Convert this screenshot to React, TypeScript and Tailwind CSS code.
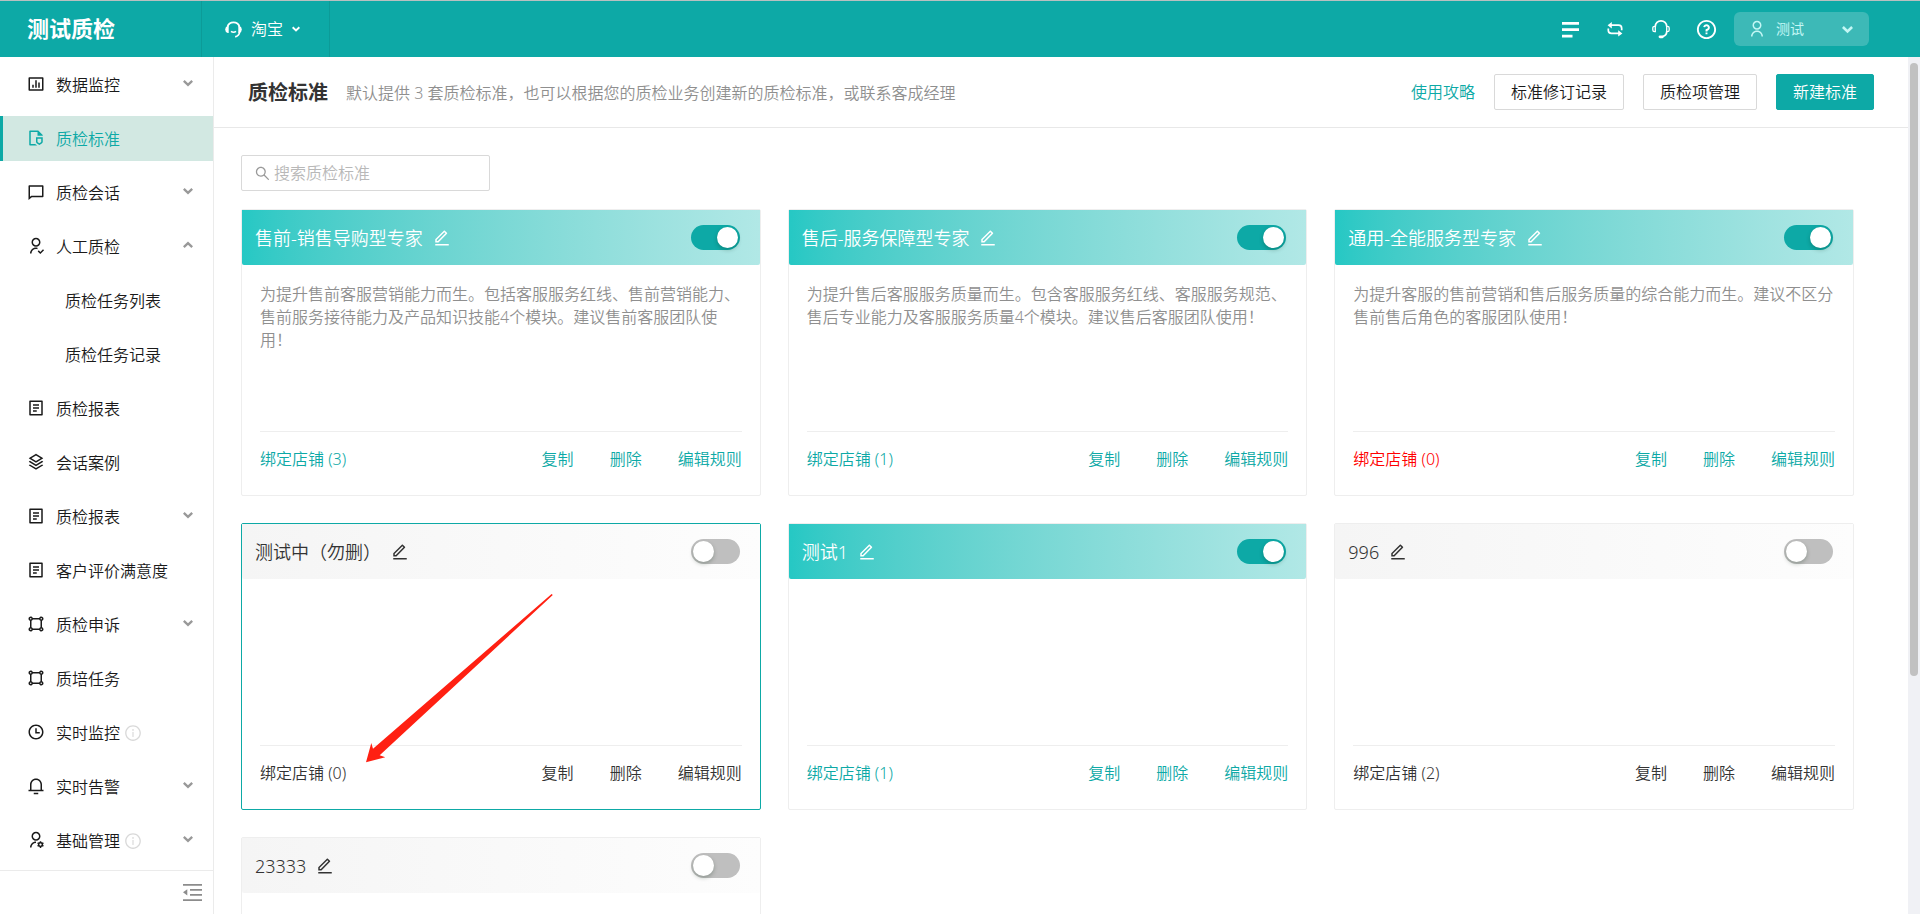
import { useState } from "react";
import type { ReactNode } from "react";
import {
  RiBarChartBoxLine,
  RiChat4Line,
  RiEditLine,
  RiFileShield2Line,
  RiNotification3Line,
  RiQuestionLine,
  RiShapeLine,
  RiStackLine,
  RiTimeLine,
  RiUserFollowLine,
  RiUserLine,
  RiUserSettingsLine,
} from "react-icons/ri";
import { AiOutlineInfoCircle, AiOutlineSearch } from "react-icons/ai";

function Chevron({ up = false, size = 10 }: { up?: boolean; size?: number }) {
  return (
    <svg width={size} height={size} viewBox="0 0 10 10" fill="none" stroke="currentColor" strokeWidth="2.4" aria-hidden="true">
      <path d={up ? "M.8 7.2 5 3.2 9.2 7.2" : "M.8 2.8 5 6.8 9.2 2.8"} />
    </svg>
  );
}

function ReportIcon() {
  return (
    <svg width="18" height="18" viewBox="0 0 24 24" fill="currentColor" aria-hidden="true">
      <path d="M20 22H4a1 1 0 0 1-1-1V3a1 1 0 0 1 1-1h16a1 1 0 0 1 1 1v18a1 1 0 0 1-1 1zm-1-2V4H5v16h14zM8 7h8v2H8V7zm0 4h8v2H8v-2zm0 4h5v2H8v-2z" />
    </svg>
  );
}

function ServiceIcon() {
  return (
    <svg width="19" height="19" viewBox="0 0 19 19" fill="none" stroke="currentColor" aria-hidden="true">
      <path d="M3.4 6.8a6.4 6.4 0 0 1 12.200 0M15.800 11.500a6.600 6.600 0 0 1-4.600 5.400" strokeWidth="1.700" />
      <path d="M4 6.600v5.600A2.900 2.900 0 0 1 4 6.600zM15 6.600v5.600a2.900 2.900 0 0 0 0-5.600z" fill="currentColor" strokeWidth="1.400" />
      <path d="M7 11.300c1.600 1.200 3.400 1.200 5 0" strokeWidth="1.600" />
    </svg>
  );
}

function BarsIcon() {
  return (
    <svg width="17" height="17" viewBox="0 0 17 17" fill="currentColor" aria-hidden="true">
      <path d="M0 1h17v2.700H0zM0 7.300h17V10H0zM0 13.700h10.500v2.700H0z" />
    </svg>
  );
}

function LoopIcon() {
  return (
    <svg width="16" height="16" viewBox="0 0 16 16" fill="none" stroke="currentColor" strokeWidth="1.700" aria-hidden="true">
      <path d="M3 4.200h8.500a3.200 3.200 0 0 1 3.200 3.200v1.800M13 12.400H4.500a3.200 3.200 0 0 1-3.200-3.200V7.400" />
      <path d="M4.800 1v6.400L.6 4.200zM11.200 9.200v6.400l4.200-3.200z" fill="currentColor" stroke="none" />
    </svg>
  );
}

function HeadsetIcon() {
  return (
    <svg width="20" height="20" viewBox="0 0 20 20" fill="none" stroke="currentColor" strokeWidth="1.700" aria-hidden="true">
      <path d="M4.300 7.500a5.700 5.700 0 0 1 11.400 0M15.700 12.500c0 2.500-1.600 4.400-4 5" />
      <path d="M4.300 7.300H3.600A1.800 1.800 0 0 0 1.800 9.100v1.800a1.800 1.800 0 0 0 1.800 1.800h.7zM15.700 7.300h.7a1.800 1.800 0 0 1 1.800 1.800v1.800a1.800 1.800 0 0 1-1.800 1.800h-.7z" strokeWidth="1.300" />
      <path d="M9 17.800h2.400" strokeWidth="2.800" strokeLinecap="round" />
    </svg>
  );
}

function CollapseIcon() {
  return (
    <svg width="19" height="17" viewBox="0 0 19 17" fill="currentColor" aria-hidden="true">
      <path d="M0 0h19v1.800H0zM7 5h12v1.700H7zM7 10h12v1.700H7zM0 15.200h19V17H0zM0 8.300 4.300 5.200v6.300z" />
    </svg>
  );
}

type NavItem = {
  label: string;
  icon?: ReactNode;
  arrow?: "up" | "down";
  info?: boolean;
  active?: boolean;
};

const navItems: NavItem[] = [
  { label: "数据监控", icon: <RiBarChartBoxLine size={18} />, arrow: "down" },
  { label: "质检标准", icon: <RiFileShield2Line size={18} />, active: true },
  { label: "质检会话", icon: <RiChat4Line size={18} />, arrow: "down" },
  { label: "人工质检", icon: <RiUserFollowLine size={18} />, arrow: "up" },
  { label: "质检任务列表" },
  { label: "质检任务记录" },
  { label: "质检报表", icon: <ReportIcon /> },
  { label: "会话案例", icon: <RiStackLine size={18} /> },
  { label: "质检报表", icon: <ReportIcon />, arrow: "down" },
  { label: "客户评价满意度", icon: <ReportIcon /> },
  { label: "质检申诉", icon: <RiShapeLine size={18} />, arrow: "down" },
  { label: "质培任务", icon: <RiShapeLine size={18} /> },
  { label: "实时监控", icon: <RiTimeLine size={18} />, info: true },
  { label: "实时告警", icon: <RiNotification3Line size={18} />, arrow: "down" },
  { label: "基础管理", icon: <RiUserSettingsLine size={18} />, arrow: "down", info: true },
];

type Standard = {
  name: string;
  description?: string;
  shops: number;
  enabled: boolean;
  warn?: boolean;
  highlighted?: boolean;
};

const standards: Standard[] = [
  {
    name: "售前-销售导购型专家",
    description:
      "为提升售前客服营销能力而生。包括客服服务红线、售前营销能力、售前服务接待能力及产品知识技能4个模块。建议售前客服团队使用！",
    shops: 3,
    enabled: true,
  },
  {
    name: "售后-服务保障型专家",
    description:
      "为提升售后客服服务质量而生。包含客服服务红线、客服服务规范、售后专业能力及客服服务质量4个模块。建议售后客服团队使用！",
    shops: 1,
    enabled: true,
  },
  {
    name: "通用-全能服务型专家",
    description: "为提升客服的售前营销和售后服务质量的综合能力而生。建议不区分售前售后角色的客服团队使用！",
    shops: 0,
    enabled: true,
    warn: true,
  },
  { name: "测试中（勿删）", shops: 0, enabled: false, highlighted: true },
  { name: "测试1", shops: 1, enabled: true },
  { name: "996", shops: 2, enabled: false },
  { name: "23333", shops: 0, enabled: false },
];

function TopBar() {
  return (
    <header className="flex h-[57px] shrink-0 border-t border-[#b9c0c0] bg-[#0da9a6] text-white">
      <div className="flex w-[202px] items-center border-r border-[#0c9b98] pb-0.5 pl-[27px] text-[22px] font-bold leading-none">
        测试质检
      </div>
      <button type="button" className="flex w-32 items-center border-r border-[#0c9b98] pl-[22px]">
        <ServiceIcon />
        <span className="ml-2 mr-[9px]">淘宝</span>
        <Chevron size={8} />
      </button>
      <div className="ml-auto flex items-center pr-[51px]">
        <button type="button" aria-label="菜单" className="mr-7">
          <BarsIcon />
        </button>
        <button type="button" aria-label="切换" className="mr-7">
          <LoopIcon />
        </button>
        <button type="button" aria-label="客服" className="mr-6">
          <HeadsetIcon />
        </button>
        <button type="button" aria-label="帮助" className="mr-4">
          <RiQuestionLine size={23} />
        </button>
        <button
          type="button"
          className="flex h-[34px] w-[135px] items-center rounded-md bg-[#3db9b7] pl-3.5 pr-4 text-sm font-normal text-[#c4f7f5]"
        >
          <RiUserLine size={18} />
          <span className="ml-2.5">测试</span>
          <span className="ml-auto">
            <Chevron size={11} />
          </span>
        </button>
      </div>
    </header>
  );
}

function Sidebar() {
  return (
    <aside className="flex w-[214px] shrink-0 flex-col border-r border-[#ebebeb] bg-white">
      <nav className="flex min-h-0 flex-1 flex-col gap-[9px] overflow-hidden pt-[5px]">
        {navItems.map((item, index) => (
          <a
            key={index}
            href="#"
            className={
              item.active
                ? "flex h-[45px] shrink-0 items-center border-l-[3px] border-[#0da9a6] bg-[#d2e8e2] pl-6 pr-5 text-[#0da9a6]"
                : "flex h-[45px] shrink-0 items-center border-l-[3px] border-transparent pl-6 pr-5 text-[#1a1a1a]"
            }
          >
            {item.icon ? <span className="mr-[11px] pb-0.5">{item.icon}</span> : null}
            <span className={item.icon ? "" : "pl-[38px]"}>{item.label}</span>
            {item.info ? <AiOutlineInfoCircle size={18} className="ml-1 text-[#d9d9d9]" /> : null}
            {item.arrow ? (
              <span className="ml-auto pb-[3px] text-[#999]">
                <Chevron up={item.arrow === "up"} />
              </span>
            ) : null}
          </a>
        ))}
      </nav>
      <div className="flex h-11 shrink-0 items-center justify-end border-t border-[#ebebeb] pr-[11px]">
        <button type="button" aria-label="收起菜单" className="text-[#8c8c8c]">
          <CollapseIcon />
        </button>
      </div>
    </aside>
  );
}

function PageHeader() {
  return (
    <div className="flex h-[71px] shrink-0 items-center border-b border-[#e8e8e8] px-[34px]">
      <div className="flex items-center gap-[18px] pt-0.5">
        <h1 className="text-xl font-bold text-[#333]">质检标准</h1>
        <p className="text-[#8f8f8f]">
          默认提供 3 套质检标准，也可以根据您的质检业务创建新的质检标准，或联系客成经理
        </p>
      </div>
      <div className="ml-auto flex items-center gap-[19px]">
        <a href="#" className="text-[#0da9a6]">
          使用攻略
        </a>
        <button type="button" className="h-9 rounded-xs border border-[#d9d9d9] bg-white px-4 text-[#1a1a1a]">
          标准修订记录
        </button>
        <button type="button" className="h-9 rounded-xs border border-[#d9d9d9] bg-white px-4 text-[#1a1a1a]">
          质检项管理
        </button>
        <button type="button" className="h-9 rounded-xs border border-[#0da9a6] bg-[#0da9a6] px-4 text-white">
          新建标准
        </button>
      </div>
    </div>
  );
}

function Pointer() {
  return (
    <svg
      className="pointer-events-none absolute left-[124px] top-[70px]"
      width="190"
      height="170"
      viewBox="0 0 190 170"
      fill="#ff2012"
      aria-hidden="true"
    >
      <path d="M0 168.300 5.300 149 7 154.700 185.600 0 186.800 1 13.700 161.300 19.300 163.300z" />
    </svg>
  );
}

function StandardCard({ item }: { item: Standard }) {
  const [enabled, setEnabled] = useState(item.enabled);
  const linkColor = enabled ? "text-[#0da9a6]" : "text-[#333]";
  return (
    <article
      className={
        item.highlighted
          ? "relative rounded-xs border border-[#0da9a6] bg-white"
          : "relative rounded-xs border border-[#eee] bg-white"
      }
    >
      <div
        className={
          enabled
            ? "flex h-[55px] items-center rounded-b-xs bg-linear-to-r from-[#25c8c4] to-[#b1e8e6] pl-[13px] pr-5 text-white"
            : "flex h-[55px] items-center rounded-b-xs bg-linear-to-r from-[#f5f5f5] to-[#fdfdfd] pl-[13px] pr-5 text-[#333]"
        }
      >
        <h2 className="text-lg">{item.name}</h2>
        <button type="button" aria-label="编辑名称" className="ml-2.5">
          <RiEditLine size={18} />
        </button>
        <input
          type="checkbox"
          role="switch"
          aria-label={item.name}
          checked={enabled}
          onChange={(event) => setEnabled(event.target.checked)}
          className="ml-auto h-[25px] w-[49px] shrink-0 appearance-none rounded-full bg-[#bfbfbf] p-0.5 before:block before:size-[21px] before:rounded-full before:bg-white before:shadow-[0_2px_4px_rgba(0,35,11,0.25)] checked:bg-[#0da9a6] checked:before:ml-6"
        />
      </div>
      <p className="h-[166px] px-[18px] pt-[18px] leading-[23px] text-[#8f8f8f]">{item.description}</p>
      <div className="mx-[18px] flex gap-9 border-t border-[#eee] pb-[25px] pt-4 leading-[22px]">
        <a href="#" className={item.warn ? "mr-auto text-[#ff0000]" : `mr-auto ${linkColor}`}>
          绑定店铺 ({item.shops})
        </a>
        <button type="button" className={linkColor}>
          复制
        </button>
        <button type="button" className={linkColor}>
          删除
        </button>
        <button type="button" className={linkColor}>
          编辑规则
        </button>
      </div>
      {item.highlighted ? <Pointer /> : null}
    </article>
  );
}

export default function App() {
  return (
    <div className="flex h-screen flex-col overflow-hidden bg-white font-['Noto_Sans','Noto_Sans_CJK_SC',sans-serif] text-base font-[350]">
      <TopBar />
      <div className="flex min-h-0 flex-1">
        <Sidebar />
        <main className="min-w-0 flex-1 overflow-y-auto [scrollbar-width:none]">
          <PageHeader />
          <div className="pb-8 pl-[27px] pr-[54px] pt-[27px]">
            <label className="flex h-9 w-[249px] items-center rounded-xs border border-[#d9d9d9] px-3 text-[#999]">
              <AiOutlineSearch size={17} />
              <input
                type="search"
                aria-label="搜索质检标准"
                placeholder="搜索质检标准"
                className="ml-[3px] min-w-0 flex-1 outline-none placeholder:text-[#b8b8b8]"
              />
            </label>
            <div className="mt-[18px] grid grid-cols-3 gap-[27px]">
              {standards.map((item) => (
                <StandardCard key={item.name} item={item} />
              ))}
            </div>
          </div>
        </main>
        <div className="w-3 shrink-0 bg-[#f0f1f5] px-0.5 pt-1.5" aria-hidden="true">
          <div className="h-[72%] w-2 rounded-full bg-[#c1c1c1]" />
        </div>
      </div>
    </div>
  );
}
